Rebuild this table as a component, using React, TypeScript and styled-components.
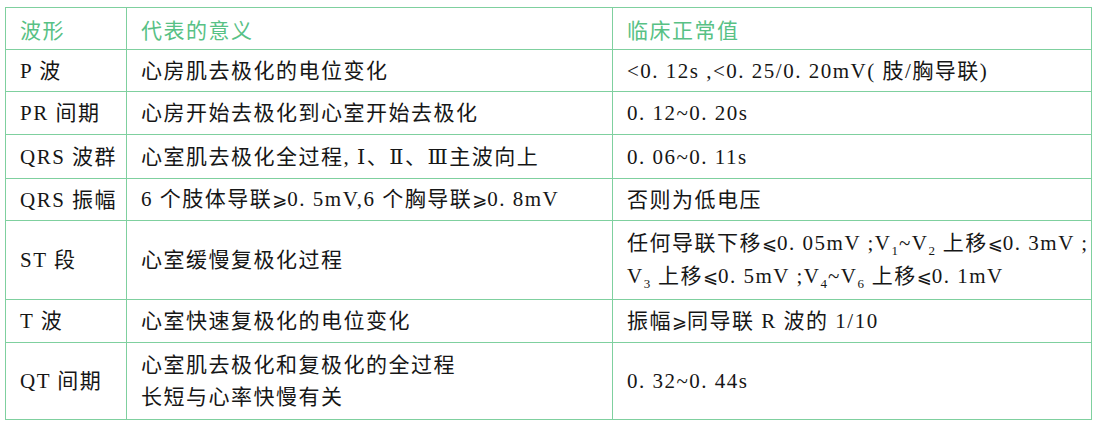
import React from "react";
import styled, { createGlobalStyle } from "styled-components";

const GlobalStyle = createGlobalStyle`
  html, body {
    margin: 0;
    padding: 0;
    background: #ffffff;
  }
  body {
    font-family: "Liberation Serif", "DejaVu Serif", "Noto Sans CJK SC", serif;
    color: #161616;
  }
`;

const GREEN_LINE = "#7fd09f";
const GREEN_TEXT = "#58c185";

interface IRow {
  wave: string;
  meaning: React.ReactNode;
  normal: React.ReactNode;
  h: number;
}

const GE = () => <Sym>⩾</Sym>;
const LE = () => <Sym>⩽</Sym>;

const rows: IRow[] = [
  {
    wave: "P 波",
    meaning: "心房肌去极化的电位变化",
    normal: "<0. 12s ,<0. 25/0. 20mV( 肢/胸导联)",
    h: 42,
  },
  {
    wave: "PR 间期",
    meaning: "心房开始去极化到心室开始去极化",
    normal: "0. 12~0. 20s",
    h: 43,
  },
  {
    wave: "QRS 波群",
    meaning: "心室肌去极化全过程, Ⅰ、Ⅱ、Ⅲ主波向上",
    normal: "0. 06~0. 11s",
    h: 44,
  },
  {
    wave: "QRS 振幅",
    meaning: (
      <>
        6 个肢体导联<GE />0. 5mV,6 个胸导联<GE />0. 8mV
      </>
    ),
    normal: "否则为低电压",
    h: 42,
  },
  {
    wave: "ST 段",
    meaning: "心室缓慢复极化过程",
    normal: (
      <>
        任何导联下移<LE />0. 05mV ;V<sub>1</sub>~V<sub>2</sub> 上移<LE />0. 3mV ;
        <br />
        V<sub>3</sub> 上移<LE />0. 5mV ;V<sub>4</sub>~V<sub>6</sub> 上移<LE />0. 1mV
      </>
    ),
    h: 79,
  },
  {
    wave: "T 波",
    meaning: "心室快速复极化的电位变化",
    normal: (
      <>
        振幅<GE />同导联 R 波的 1/10
      </>
    ),
    h: 43,
  },
  {
    wave: "QT 间期",
    meaning: (
      <>
        心室肌去极化和复极化的全过程
        <br />
        长短与心率快慢有关
      </>
    ),
    normal: "0. 32~0. 44s",
    h: 77,
  },
];

export default function App() {
  return (
    <>
      <GlobalStyle />
      <Page>
        <Table>
          <colgroup>
            <col style={{ width: 121 }} />
            <col style={{ width: 486 }} />
            <col style={{ width: 479 }} />
          </colgroup>
          <thead>
            <Row $h={42}>
              <HeadCell>波形</HeadCell>
              <HeadCell>代表的意义</HeadCell>
              <HeadCell>临床正常值</HeadCell>
            </Row>
          </thead>
          <tbody>
            {rows.map((r) => (
              <Row key={r.wave} $h={r.h}>
                <Cell>{r.wave}</Cell>
                <Cell>{r.meaning}</Cell>
                <Cell>{r.normal}</Cell>
              </Row>
            ))}
          </tbody>
        </Table>
      </Page>
    </>
  );
}

// STYLED COMPONENTS

const Page = styled.div`
  padding: 7px 0 0 5px;
`;

const Table = styled.table`
  border-collapse: collapse;
  table-layout: fixed;
  width: 1086px;
  border: 1px solid ${GREEN_LINE};
`;

const Row = styled.tr<{ $h: number }>`
  height: ${(p) => p.$h}px;
`;

const Cell = styled.td`
  border: 1px solid ${GREEN_LINE};
  padding: 0 0 0 14px;
  font-size: 21px;
  letter-spacing: 1.5px;
  line-height: 32px;
  vertical-align: middle;
  white-space: nowrap;
  text-align: left;

  & sub {
    font-size: 13px;
    vertical-align: -5px;
    line-height: 0;
    letter-spacing: 0;
    margin-right: 1px;
  }
`;

const Sym = styled.span`
  font-family: "DejaVu Sans", "Liberation Serif", sans-serif;
  font-size: 18px;
  letter-spacing: 0;
`;

const HeadCell = styled.th`
  border: 1px solid ${GREEN_LINE};
  padding: 0 0 0 14px;
  font-family: "Noto Sans CJK SC", sans-serif;
  font-weight: 400;
  font-size: 21px;
  letter-spacing: 1.5px;
  color: ${GREEN_TEXT};
  text-align: left;
  vertical-align: middle;
`;
